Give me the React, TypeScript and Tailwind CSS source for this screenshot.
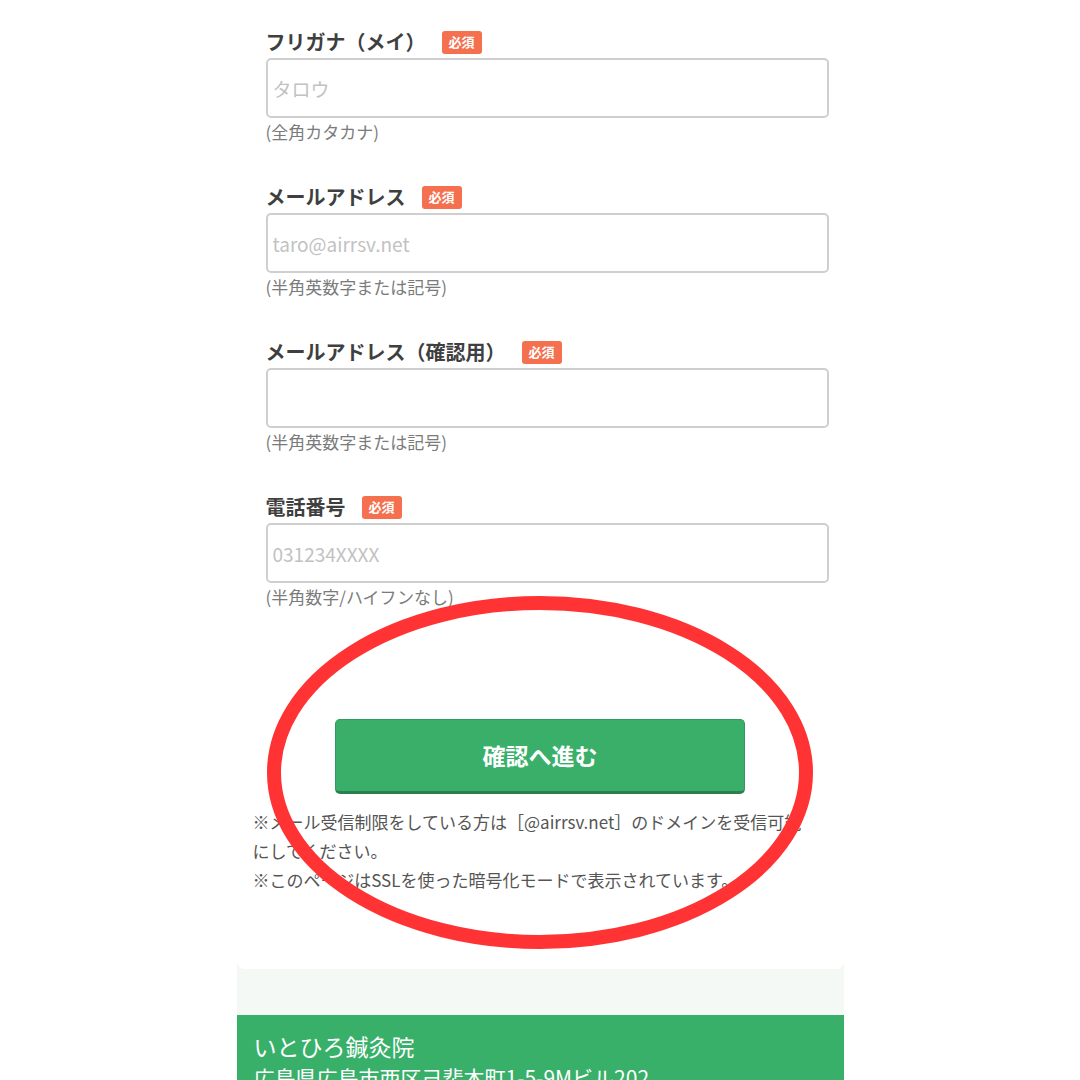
// Reservation form (tail end) — remaining customer fields, the submit
// button, notes, and the clinic footer. A red marker ellipse sits on top.
const FONT = "font-['Noto_Sans_CJK_JP','Noto_Sans',sans-serif]";

type Field = {
  label: string;
  placeholder: string;
  hint: string;
};

const FIELDS: Field[] = [
  { label: "フリガナ（メイ）", placeholder: "タロウ", hint: "(全角カタカナ)" },
  { label: "メールアドレス", placeholder: "taro@airrsv.net", hint: "(半角英数字または記号)" },
  { label: "メールアドレス（確認用）", placeholder: "", hint: "(半角英数字または記号)" },
  { label: "電話番号", placeholder: "031234XXXX", hint: "(半角数字/ハイフンなし)" },
];

function FormField({ field }: { field: Field }) {
  return (
    <div className="mb-[39px]">
      <div className="flex items-center h-[24px]">
        <span className="text-[20px] leading-[24px] font-bold text-[#3f3f3f]">{field.label}</span>
        <span className="ml-4 w-[40px] h-[23px] rounded-[3px] bg-[#f4704f] text-white text-[13px] font-bold flex items-center justify-center">
          必須
        </span>
      </div>
      <input
        className="mt-1 block w-[563px] h-[60px] border-2 border-[#cfcfcf] rounded-[5px] px-[5px] text-[19px] text-[#333] placeholder:text-[#c2c2c2] outline-none bg-white"
        placeholder={field.placeholder}
      />
      <div className="text-[17px] leading-[28px] text-[#7b7b7b]">{field.hint}</div>
    </div>
  );
}

export default function App() {
  return (
    <div className={`relative w-[1080px] h-[1080px] overflow-hidden bg-white ${FONT}`}>
      <div className="mx-auto w-[607px] bg-[#f5f9f6] min-h-full">
        {/* ── Form card ── */}
        <div className="bg-white rounded-b-[8px] px-4 pt-[30px] pb-[75px]">
          <div className="pl-[13px]">
            {FIELDS.map((f) => (
              <FormField key={f.label} field={f} />
            ))}
          </div>

          <div className="pt-[69px] flex justify-center">
            <button className="w-[410px] h-[75px] rounded-[5px] bg-[#39af6a] border border-[#2f9a5a] border-b-[3px] border-b-[#2a7f4c] text-white text-[23px] font-bold">
              確認へ進む
            </button>
          </div>

          <p className="mt-[13px] text-[17px] leading-[29px] text-[#555]">
            ※メール受信制限をしている方は［@airrsv.net］のドメインを受信可能
            <br />
            にしてください。
            <br />
            ※このページはSSLを使った暗号化モードで表示されています。
          </p>
        </div>

        {/* ── Footer ── */}
        <div className="mt-[46px] bg-[#38b06a] px-[17px] pt-[15px] pb-6 text-white">
          <div className="text-[23px] leading-[32px]">いとひろ鍼灸院</div>
          <div className="text-[21px] leading-[30px]">広島県広島市西区己斐本町1-5-9Mビル202</div>
        </div>
      </div>

      {/* Red marker ellipse drawn over the button */}
      <svg className="absolute inset-0 pointer-events-none" width="1080" height="1080">
        <ellipse cx="540" cy="772.5" rx="266" ry="169.5" fill="none" stroke="#ff3333" strokeWidth="14" />
      </svg>
    </div>
  );
}
